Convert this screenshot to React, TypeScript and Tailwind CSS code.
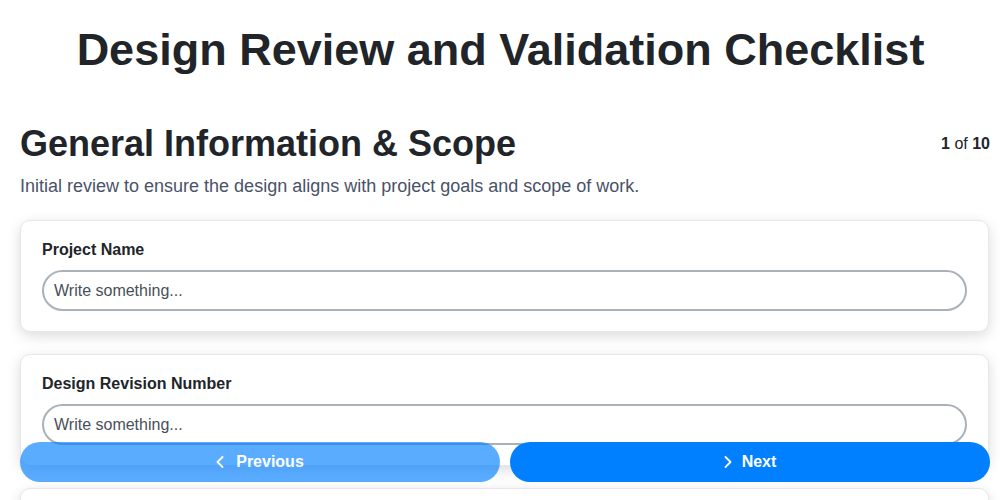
const fields = [
  { label: "Project Name" },
  { label: "Design Revision Number" },
  { label: "Client / Stakeholder" },
];

function Chevron({ dir }: { dir: "left" | "right" }) {
  return (
    <svg width="8" height="12" viewBox="0 0 8 12" fill="none" stroke="currentColor" strokeWidth="1.8" strokeLinecap="round" strokeLinejoin="round">
      <path d={dir === "left" ? "M6.5 1 L1.5 6 L6.5 11" : "M1.5 1 L6.5 6 L1.5 11"} />
    </svg>
  );
}

function FieldCard({ label }: { label: string }) {
  return (
    <div className="bg-white border border-[#e5e7eb] rounded-[10px] px-[21px] py-5 shadow-[0_4px_14px_rgba(0,0,0,0.14)]">
      <label className="block text-[16px] leading-[18px] font-bold text-[#212529] mb-[11px]">{label}</label>
      <input
        type="text"
        placeholder="Write something..."
        className="w-full h-[41px] rounded-full border-2 border-[#a9b1ba] bg-white px-[10px] text-[16px] text-[#212529] placeholder:text-[#495057] outline-none"
      />
    </div>
  );
}

export default function App() {
  return (
    <div className="min-h-screen bg-white text-[#212529] font-['Liberation_Sans',Arial,sans-serif]">
      <div className="pl-5 pr-[11px] pt-[21px] pb-24">
        {/* Title */}
        <h1 className="text-center text-[45px] leading-[58px] font-bold text-[#212529] pr-2">
          Design Review and Validation Checklist
        </h1>

        {/* Section header */}
        <div className="mt-[43px] flex items-start justify-between">
          <h2 className="text-[36px] leading-[44px] font-bold text-[#212529]">General Information &amp; Scope</h2>
          <p className="text-[16px] mt-[10px] -mr-[1px]">
            <span className="font-bold">1</span> of <span className="font-bold">10</span>
          </p>
        </div>
        <p className="mt-[8px] text-[18px] leading-6 text-[#4a5268]">
          Initial review to ensure the design aligns with project goals and scope of work.
        </p>

        {/* Fields */}
        <div className="mt-[22px] flex flex-col gap-[22px]">
          {fields.map((f) => (
            <FieldCard key={f.label} label={f.label} />
          ))}
        </div>
      </div>

      {/* Footer nav */}
      <div className="fixed left-5 right-[10px] bottom-[18px] grid grid-cols-2 gap-[10px]">
        <button className="h-10 rounded-full bg-[#0080ff] opacity-65 text-white font-bold text-[16px] flex items-center justify-center gap-3">
          <Chevron dir="left" />
          Previous
        </button>
        <button className="h-10 rounded-full bg-[#0080ff] text-white font-bold text-[16px] flex items-center justify-center gap-[10px]">
          <Chevron dir="right" />
          Next
        </button>
      </div>
    </div>
  );
}
